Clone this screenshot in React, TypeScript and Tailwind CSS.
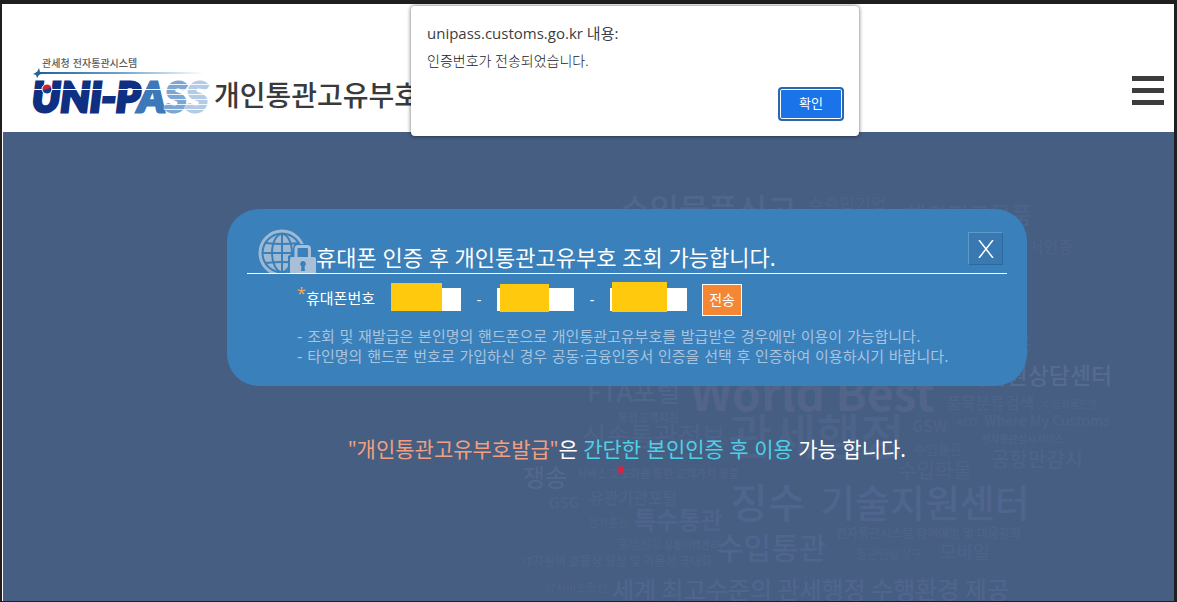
import React, { useState } from 'react';

type CloudWord = { text: string; x: number; y: number; size: number; weight?: number; tone?: string };

const cloudWords: CloudWord[] = [
  { text: '수입물품신고', x: 120, y: 30, size: 32, weight: 500, tone: '#50668b' },
  { text: '수출입기업', x: 308, y: 19, size: 17 },
  { text: '해외직구물품', x: 405, y: 32, size: 23, weight: 500 },
  { text: '증서인증', x: 514, y: 61, size: 16 },
  { text: '고객지원상담센터', x: 443, y: 192, size: 23, weight: 500, tone: '#566b8f' },
  { text: '용', x: 512, y: 160, size: 22 },
  { text: 'FTA포털', x: 87, y: 210, size: 26, weight: 500, tone: '#50658a' },
  { text: 'World Best', x: 190, y: 219, size: 46, weight: 700, tone: '#526589' },
  { text: '품목분류검색', x: 446, y: 217, size: 16, weight: 500 },
  { text: '수입화물진행', x: 542, y: 216, size: 10 },
  { text: '통합고객지원', x: 118, y: 230, size: 11, weight: 700 },
  { text: '관세행정', x: 228, y: 262, size: 48, weight: 500 },
  { text: 'GSW', x: 412, y: 240, size: 16, weight: 500 },
  { text: 'AEO', x: 456, y: 234, size: 11 },
  { text: 'Where My Customs', x: 484, y: 234, size: 14, weight: 500 },
  { text: '전자통관심사서비스', x: 481, y: 251, size: 10, weight: 700 },
  { text: '신속통관정보', x: 82, y: 254, size: 26 },
  { text: '수입통관', x: 414, y: 262, size: 13 },
  { text: '공항만감시', x: 491, y: 275, size: 20, weight: 500 },
  { text: '쟁송', x: 23, y: 294, size: 24, weight: 500, tone: '#52678c' },
  { text: '서비스 고도화를 통한 고객가치 창출', x: 77, y: 286, size: 11, weight: 700 },
  { text: '수입화물', x: 398, y: 286, size: 20 },
  { text: 'GSG', x: 49, y: 316, size: 15, weight: 500 },
  { text: '유관기관포털', x: 89, y: 312, size: 16, weight: 500 },
  { text: '징수', x: 230, y: 326, size: 41, weight: 500, tone: '#50658d' },
  { text: '기술지원센터', x: 320, y: 325, size: 38, weight: 500, tone: '#50658d' },
  { text: '전자통관', x: 88, y: 335, size: 11 },
  { text: '특수통관', x: 134, y: 337, size: 24, weight: 700, tone: '#4f648c' },
  { text: '품명신고', x: 118, y: 357, size: 12 },
  { text: '유통이력관리', x: 164, y: 357, size: 10, weight: 700 },
  { text: '수입통관', x: 216, y: 367, size: 30, weight: 500, tone: '#50658d' },
  { text: '전자통관시스템 장애예방 및 대응강화', x: 336, y: 346, size: 12, weight: 500 },
  { text: '통관단일창구', x: 356, y: 367, size: 12 },
  { text: '모바일', x: 440, y: 367, size: 18 },
  { text: 'IT자원의 효율성 향상 및 가용성 극대화', x: 22, y: 374, size: 12, weight: 500 },
  { text: 'IT서비스혁신', x: 46, y: 400, size: 11 },
  { text: '세계 최고수준의 관세행정 수행환경 제공', x: 112, y: 407, size: 24, weight: 500, tone: '#50658d' },
];

const WordCloud: React.FC = () => (
  <svg
    viewBox="0 0 640 420"
    className="absolute top-[60px] left-[497px] w-[640px] h-[420px] pointer-events-none"
    fontFamily="'Noto Sans CJK KR', sans-serif"
    aria-hidden="true"
  >
    {cloudWords.map((w, i) => (
      <text
        key={i}
        x={w.x}
        y={w.y}
        fontSize={w.size}
        fontWeight={w.weight ?? 400}
        fill={w.tone ?? '#4e6389'}
      >
        {w.text}
      </text>
    ))}
  </svg>
);

const Logo: React.FC = () => (
  <svg viewBox="0 0 180 64" className="w-[180px] h-16 shrink-0" role="img" aria-label="UNI-PASS">
    <defs>
      <linearGradient id="rule" x1="0" x2="1" y1="0" y2="0">
        <stop offset="0" stopColor="#1d5f9c" />
        <stop offset="0.5" stopColor="#6fa3cd" />
        <stop offset="1" stopColor="#ffffff" />
      </linearGradient>
      <pattern id="stripeMid" width="8" height="5" patternUnits="userSpaceOnUse">
        <rect width="8" height="5" fill="#e9f1f9" />
        <rect width="8" height="4" fill="#7ea6d3" />
      </pattern>
      <pattern id="stripeLight" width="8" height="5" patternUnits="userSpaceOnUse">
        <rect width="8" height="5" fill="#f5f9fd" />
        <rect width="8" height="4" fill="#b3cbe6" />
      </pattern>
      <linearGradient id="ball" x1="0" x2="0.3" y1="0" y2="1">
        <stop offset="0.55" stopColor="#d3202f" />
        <stop offset="0.65" stopColor="#123c93" />
      </linearGradient>
    </defs>
    <text x="12" y="12" fontSize="10" fontWeight="500" fill="#5a5a5a" fontFamily="'DejaVu Sans', 'Noto Sans CJK KR', sans-serif">
      관세청 전자통관시스템
    </text>
    <rect x="6" y="17" width="168" height="2" fill="url(#rule)" />
    <path d="M9 13 L10 17 L13 18 L9 20 L7 23 L6 20 L3 19 L7 17 Z" fill="#226398" />
    <text
      x="2"
      y="57"
      fontSize="41"
      fontWeight="900"
      fontStyle="italic"
      strokeWidth="3"
      fontFamily="Lato, 'Liberation Sans', sans-serif"
    >
      <tspan fill="#0f2f82" stroke="#0f2f82">UNI-P</tspan>
      <tspan fill="#3d78b8" stroke="#3d78b8">A</tspan>
      <tspan fill="url(#stripeMid)" stroke="url(#stripeMid)">S</tspan>
      <tspan fill="url(#stripeLight)" stroke="url(#stripeLight)">S</tspan>
    </text>
    <path d="M4 34.500 H132" stroke="#ffffff" strokeWidth="1" />
    <circle cx="17" cy="34" r="5" fill="url(#ball)" stroke="#ffffff" strokeWidth="1" />
  </svg>
);

const GlobeLock: React.FC = () => (
  <svg viewBox="0 0 58 44" className="w-[58px] h-11 shrink-0" aria-hidden="true">
    <circle cx="24" cy="24" r="22" fill="none" stroke="#9fb9d2" strokeWidth="3" />
    <circle cx="24" cy="24" r="18.500" fill="#9fb9d2" />
    <g fill="none" stroke="#3a80bb" strokeWidth="2">
      <path d="M24 5 V44" />
      <ellipse cx="24" cy="24" rx="10" ry="19" />
      <path d="M5 24 H43 M8 14 Q24 16 40 14 M8 34 Q24 32 40 34" />
    </g>
    <path d="M36 15 H48 L56 26 V44 H30 V27 L34 25 Z" fill="#3a80bb" />
    <path d="M38 29 V20 Q38 17.500 40.500 17.500 H49 Q51.500 17.500 51.500 20 V29" fill="none" stroke="#a9bfd5" strokeWidth="3" />
    <rect x="32" y="28" width="26" height="18" rx="2" fill="#a9bfd5" />
    <path d="M45 32 a3 3 0 0 1 1.500 5.500 L47 42 H43 L43.500 37.500 A3 3 0 0 1 45 32 Z" fill="#3a80bb" />
  </svg>
);

const phoneFields = [
  { id: 'phone1', label: '휴대폰번호 앞자리', box: 'w-[70px]', cover: 'left-0 -top-[5px] w-[51px] h-7' },
  { id: 'phone2', label: '휴대폰번호 중간자리', box: 'w-[77px]', cover: 'left-[3px] -top-1 w-[49px] h-7' },
  { id: 'phone3', label: '휴대폰번호 끝자리', box: 'w-[77px]', cover: 'left-[2px] -top-[6px] w-[55px] h-[30px]' },
];

const notes = [
  '- 조회 및 재발급은 본인명의 핸드폰으로 개인통관고유부호를 발급받은 경우에만 이용이 가능합니다.',
  '- 타인명의 핸드폰 번호로 가입하신 경우 공동·금융인증서 인증을 선택 후 인증하여 이용하시기 바랍니다.',
];

const PhonePanel: React.FC = () => {
  const [phone, setPhone] = useState<Record<string, string>>({});

  return (
    <section className="relative w-full max-w-[800px] rounded-[32px] bg-[#3a80bb] px-5 pb-[19px]">
      <div className="flex h-[65px] items-end border-b border-white pl-[11px]">
        <GlobeLock />
        <h2 className="flex-1 text-[22px] leading-8 text-white whitespace-nowrap">
          휴대폰 인증 후 개인통관고유부호 조회 가능합니다.
        </h2>
        <button
          type="button"
          aria-label="닫기"
          className="mr-1 mb-2 flex h-[33px] w-[35px] items-center justify-center border border-t-[#5f9aca] border-l-[#5f9aca] border-r-[#2c699f] border-b-[#2c699f] bg-[#3879b1]"
        >
          <svg viewBox="0 0 16 18" className="w-4 h-[18px]" stroke="#ffffff" strokeWidth="1.500">
            <path d="M1 0 L15 18 M15 0 L1 18" />
          </svg>
        </button>
      </div>

      <form className="mb-[2px] flex h-[51px] items-center pl-[50px]" onSubmit={e => e.preventDefault()}>
        <label htmlFor="phone1" className="flex items-center pb-1 text-[15px] leading-5 text-white whitespace-nowrap">
          <span className="w-[9px] self-start text-base leading-[10px] text-[#f0a860]">*</span>
          휴대폰번호
        </label>
        <div className="flex items-center pl-4">
          {phoneFields.map((f, i) => (
            <React.Fragment key={f.id}>
              {i > 0 && <span className="w-9 text-center text-sm text-white">-</span>}
              <div className="relative flex">
                <input
                  id={f.id}
                  type="text"
                  aria-label={f.label}
                  value={phone[f.id] ?? ''}
                  onChange={e => setPhone({ ...phone, [f.id]: e.target.value })}
                  className={`h-[23px] bg-white px-1 text-sm text-gray-800 outline-none ${f.box}`}
                />
                <span className={`absolute bg-[#ffc90e] ${f.cover}`} />
              </div>
            </React.Fragment>
          ))}
        </div>
        <button type="submit" className="ml-[15px] h-8 w-10 border border-white bg-[#f58634] text-sm text-white">
          전송
        </button>
      </form>

      <ul className="pl-[50px] font-['DejaVu_Sans','Noto_Sans_CJK_KR',sans-serif] text-[15px] leading-5 text-[#a9c3dc] whitespace-nowrap">
        {notes.map(n => (
          <li key={n}>{n}</li>
        ))}
      </ul>
    </section>
  );
};

const AlertDialog: React.FC<{ onClose: () => void }> = ({ onClose }) => (
  <div
    role="alertdialog"
    aria-labelledby="alert-title"
    className="absolute top-[6px] left-[411px] z-10 w-[448px] rounded bg-white pt-[15px] pr-[15px] pb-[15px] pl-4 text-[#202124] shadow-[0_0_4px_rgba(0,0,0,0.6)]"
  >
    <h2 id="alert-title" className="font-['Open_Sans','Noto_Sans_CJK_KR',sans-serif] text-[15px] leading-6 text-[#3c3d40]">
      unipass.customs.go.kr 내용:
    </h2>
    <p className="mt-1 text-sm leading-6 font-light">인증번호가 전송되었습니다.</p>
    <div className="mt-[14px] flex justify-end">
      <button
        type="button"
        onClick={onClose}
        className="h-[34px] w-[66px] rounded border-2 border-[#2a67ad] bg-[#1a73e8] text-[13px] text-white inset-ring inset-ring-white"
      >
        확인
      </button>
    </div>
  </div>
);

export default function App() {
  const [alertOpen, setAlertOpen] = useState(true);

  return (
    <div className="relative flex min-h-screen flex-col bg-[#1f1f21] pt-1 pr-[3px] pb-px pl-[2px] font-['Noto_Sans','Noto_Sans_CJK_KR',sans-serif]">
      <header className="flex h-32 items-center justify-between bg-white pr-[10px] pl-7">
        <div className="flex items-center pt-[38px]">
          <Logo />
          <h1 className="pt-4 pl-1 text-[28px] leading-9 font-medium text-[#3a3a3a] whitespace-nowrap">
            개인통관고유부호
          </h1>
        </div>
        <button type="button" aria-label="메뉴" className="mt-[45px] flex flex-col gap-[7px]">
          <span className="h-[5px] w-8 bg-[#3c3c3c]" />
          <span className="h-[5px] w-8 bg-[#3c3c3c]" />
          <span className="h-[5px] w-8 bg-[#3c3c3c]" />
        </button>
      </header>

      <main className="relative flex flex-1 flex-col items-center overflow-hidden border-l border-white bg-[#465e82] pt-[77px] pl-[77px]">
        <WordCloud />
        <PhonePanel />
        <div className="relative mt-12">
          <p className="text-[21px] leading-[30px] text-white whitespace-nowrap">
            <span className="text-[#f0a080]">"개인통관고유부호발급"</span>은{' '}
            <span className="text-[#4fd0e4]">간단한 본인인증 후 이용</span> 가능 합니다.
          </p>
          <span className="absolute top-8 left-[270px] h-2 w-[6px] rounded-full bg-[#c92a48]" />
        </div>
      </main>

      {alertOpen && <AlertDialog onClose={() => setAlertOpen(false)} />}
    </div>
  );
}
